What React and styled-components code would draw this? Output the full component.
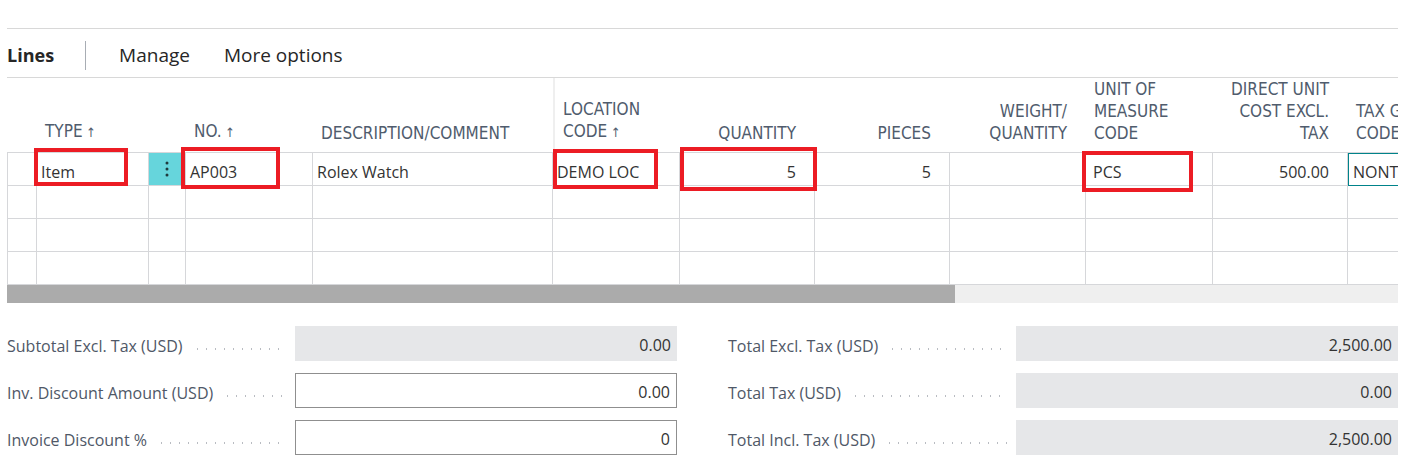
import React from 'react';
import styled, { createGlobalStyle } from 'styled-components';

// Global //
// ---------------//
const GlobalStyle = createGlobalStyle`
  html, body {
    margin: 0;
    padding: 0;
    background: #ffffff;
  }
  body {
    font-family: "Open Sans", "Noto Sans", sans-serif;
    color: #333333;
  }
  * { box-sizing: border-box; }
`;

// Tokens //
// ---------------//
const gridLine = '#d6d7da';
const headerColor = '#505c6d';
const annotationRed = '#ec1c24';
const columns = [30, 112, 37, 127, 240, 127, 135, 135, 136, 127, 135, 135];
const gridTemplate = columns.map((w) => `${w}px`).join(' ');

// Styles //
// ---------------//
const Page = styled.div`
  padding: 28px 18px 0 7px;
  width: 1416px;
  height: 471px;
  overflow: hidden;
`;

const Toolbar = styled.div`
  display: flex;
  align-items: center;
  height: 50px;
  padding-top: 4px;
  border-top: 1px solid #d8d8d8;
  border-bottom: 1px solid #d8d8d8;
  font-size: 19px;
  color: #262626;
`;

const ToolbarTitle = styled.span`
  font-weight: 700;
  font-size: 18px;
  padding-right: 31px;
  border-right: 1px solid #a8adb4;
  line-height: 29px;
`;

const ToolbarAction = styled.span`
  margin-left: ${(p) => p.$gap}px;
`;

const Viewport = styled.div`
  width: 1391px;
  overflow: hidden;
`;

const Row = styled.div`
  display: grid;
  grid-template-columns: ${gridTemplate};
  width: max-content;
`;

const HeaderRow = styled(Row)`
  height: 75px;
  border-bottom: 1px solid ${gridLine};
  align-items: end;
`;

const HeaderCell = styled.div`
  font-family: "DejaVu Sans Condensed", "DejaVu Sans", sans-serif;
  font-stretch: condensed;
  font-size: 17px;
  line-height: 22px;
  font-weight: 500;
  color: ${headerColor};
  text-transform: uppercase;
  text-align: ${(p) => (p.$right ? 'right' : 'left')};
  padding: 0 ${(p) => (p.$right ? '19px' : '0')} 10px ${(p) => (p.$right ? '0' : '8px')};
  height: 100%;
  display: flex;
  flex-direction: column;
  justify-content: flex-end;
  white-space: nowrap;
  border-left: ${(p) => (p.$divider ? '2px solid #efefef' : 'none')};
`;

const BodyRow = styled(Row)`
  height: 33px;
`;

const Cell = styled.div`
  position: relative;
  display: flex;
  align-items: center;
  justify-content: ${(p) => (p.$right ? 'flex-end' : 'flex-start')};
  padding: 5px ${(p) => (p.$right ? '18px' : '0')} 0 ${(p) => (p.$right ? '0' : `${p.$pad ?? 4}px`)};
  border-right: 1px solid ${gridLine};
  border-bottom: 1px solid ${gridLine};
  border-left: ${(p) => (p.$first ? `1px solid ${gridLine}` : 'none')};
  font-size: 16px;
  color: #333333;
  white-space: nowrap;
  overflow: visible;
`;

const MenuCell = styled(Cell)`
  background: #66d5dc;
  justify-content: center;
  padding: 0;
`;

const FocusCell = styled(Cell)`
  outline: 1px solid #00838a;
  outline-offset: -1px;
  overflow: hidden;
`;

const Annotation = styled.div`
  position: absolute;
  left: ${(p) => p.$x}px;
  top: ${(p) => p.$y}px;
  width: ${(p) => p.$w}px;
  height: ${(p) => p.$h}px;
  border: 4px solid ${annotationRed};
  pointer-events: none;
  z-index: 2;
`;

const Scrollbar = styled.div`
  width: 1391px;
  height: 18px;
  background: #efefef;
  display: flex;
`;

const ScrollThumb = styled.div`
  width: 948px;
  background: #ababab;
`;

const Totals = styled.div`
  display: grid;
  grid-template-columns: 670px 670px;
  column-gap: 51px;
  margin-top: 23px;
`;

const TotalsGroup = styled.div`
  display: flex;
  flex-direction: column;
  gap: 12px;
`;

const TotalsRow = styled.div`
  display: flex;
  align-items: center;
  height: 35px;
`;

const Label = styled.div`
  width: 288px;
  display: flex;
  align-items: center;
  padding: 5px 8px 0 0;
  font-size: 16px;
  color: #4f5867;
  white-space: nowrap;
`;

const Leader = styled.span`
  flex: 1;
  height: 2px;
  margin: 6px 0 0 10px;
  background-image: radial-gradient(circle, #b9bcc2 0.9px, transparent 1.1px);
  background-size: 9px 2px;
  background-repeat: repeat-x;
`;

const Field = styled.div`
  flex: 1;
  height: 35px;
  display: flex;
  align-items: center;
  justify-content: flex-end;
  padding: 2px 6px 0 0;
  font-size: 16px;
  color: #333333;
  background: ${(p) => (p.$editable ? '#ffffff' : '#e6e7e9')};
  border: ${(p) => (p.$editable ? '1px solid #8f8f8f' : 'none')};
`;

// Components //
// -----------------//
const Arrow = () => <span style={{ fontSize: 13 }}> ↑</span>;

function DotsIcon() {
  return (
    <svg width="4" height="16" viewBox="0 0 4 16">
      <circle cx="2" cy="2" r="1.5" fill="#1f3a3d" />
      <circle cx="2" cy="8" r="1.5" fill="#1f3a3d" />
      <circle cx="2" cy="14" r="1.5" fill="#1f3a3d" />
    </svg>
  );
}

function TotalLine({ label, value, editable }) {
  return (
    <TotalsRow>
      <Label>
        {label}
        <Leader />
      </Label>
      <Field $editable={editable}>{value}</Field>
    </TotalsRow>
  );
}

function EmptyRow() {
  return (
    <BodyRow>
      {columns.map((w, i) => (
        <Cell key={i} $first={i === 0} />
      ))}
    </BodyRow>
  );
}

export default function App() {
  return (
    <Page>
      <GlobalStyle />
      <Toolbar>
        <ToolbarTitle>Lines</ToolbarTitle>
        <ToolbarAction $gap={33}>Manage</ToolbarAction>
        <ToolbarAction $gap={34}>More options</ToolbarAction>
      </Toolbar>

      <Viewport>
        <HeaderRow>
          <HeaderCell />
          <HeaderCell>
            <span>TYPE<Arrow /></span>
          </HeaderCell>
          <HeaderCell />
          <HeaderCell>
            <span>NO.<Arrow /></span>
          </HeaderCell>
          <HeaderCell>DESCRIPTION/COMMENT</HeaderCell>
          <HeaderCell $divider>
            <span>LOCATION</span>
            <span>CODE<Arrow /></span>
          </HeaderCell>
          <HeaderCell $right>QUANTITY</HeaderCell>
          <HeaderCell $right>PIECES</HeaderCell>
          <HeaderCell $right>
            <span>WEIGHT/</span>
            <span>QUANTITY</span>
          </HeaderCell>
          <HeaderCell>
            <span>UNIT OF</span>
            <span>MEASURE</span>
            <span>CODE</span>
          </HeaderCell>
          <HeaderCell $right>
            <span>DIRECT UNIT</span>
            <span>COST EXCL.</span>
            <span>TAX</span>
          </HeaderCell>
          <HeaderCell>
            <span>TAX GROUP</span>
            <span>CODE</span>
          </HeaderCell>
        </HeaderRow>

        <BodyRow>
          <Cell $first />
          <Cell>
            Item
            <Annotation $x={-3} $y={-5} $w={94} $h={38} />
          </Cell>
          <MenuCell>
            <DotsIcon />
          </MenuCell>
          <Cell>
            AP003
            <Annotation $x={-5} $y={-6} $w={99} $h={42} />
          </Cell>
          <Cell>Rolex Watch</Cell>
          <Cell>
            DEMO LOC
            <Annotation $x={0} $y={-4} $w={105} $h={40} />
          </Cell>
          <Cell $right>
            5
            <Annotation $x={0} $y={-6} $w={137} $h={44} />
          </Cell>
          <Cell $right>5</Cell>
          <Cell />
          <Cell $pad={7}>
            PCS
            <Annotation $x={-4} $y={-2} $w={111} $h={41} />
          </Cell>
          <Cell $right>500.00</Cell>
          <FocusCell $pad={5}>NONTAXABLE</FocusCell>
        </BodyRow>
        <EmptyRow />
        <EmptyRow />
        <EmptyRow />
      </Viewport>

      <Scrollbar>
        <ScrollThumb />
      </Scrollbar>

      <Totals>
        <TotalsGroup>
          <TotalLine label="Subtotal Excl. Tax (USD)" value="0.00" />
          <TotalLine label="Inv. Discount Amount (USD)" value="0.00" editable />
          <TotalLine label="Invoice Discount %" value="0" editable />
        </TotalsGroup>
        <TotalsGroup>
          <TotalLine label="Total Excl. Tax (USD)" value="2,500.00" />
          <TotalLine label="Total Tax (USD)" value="0.00" />
          <TotalLine label="Total Incl. Tax (USD)" value="2,500.00" />
        </TotalsGroup>
      </Totals>
    </Page>
  );
}
